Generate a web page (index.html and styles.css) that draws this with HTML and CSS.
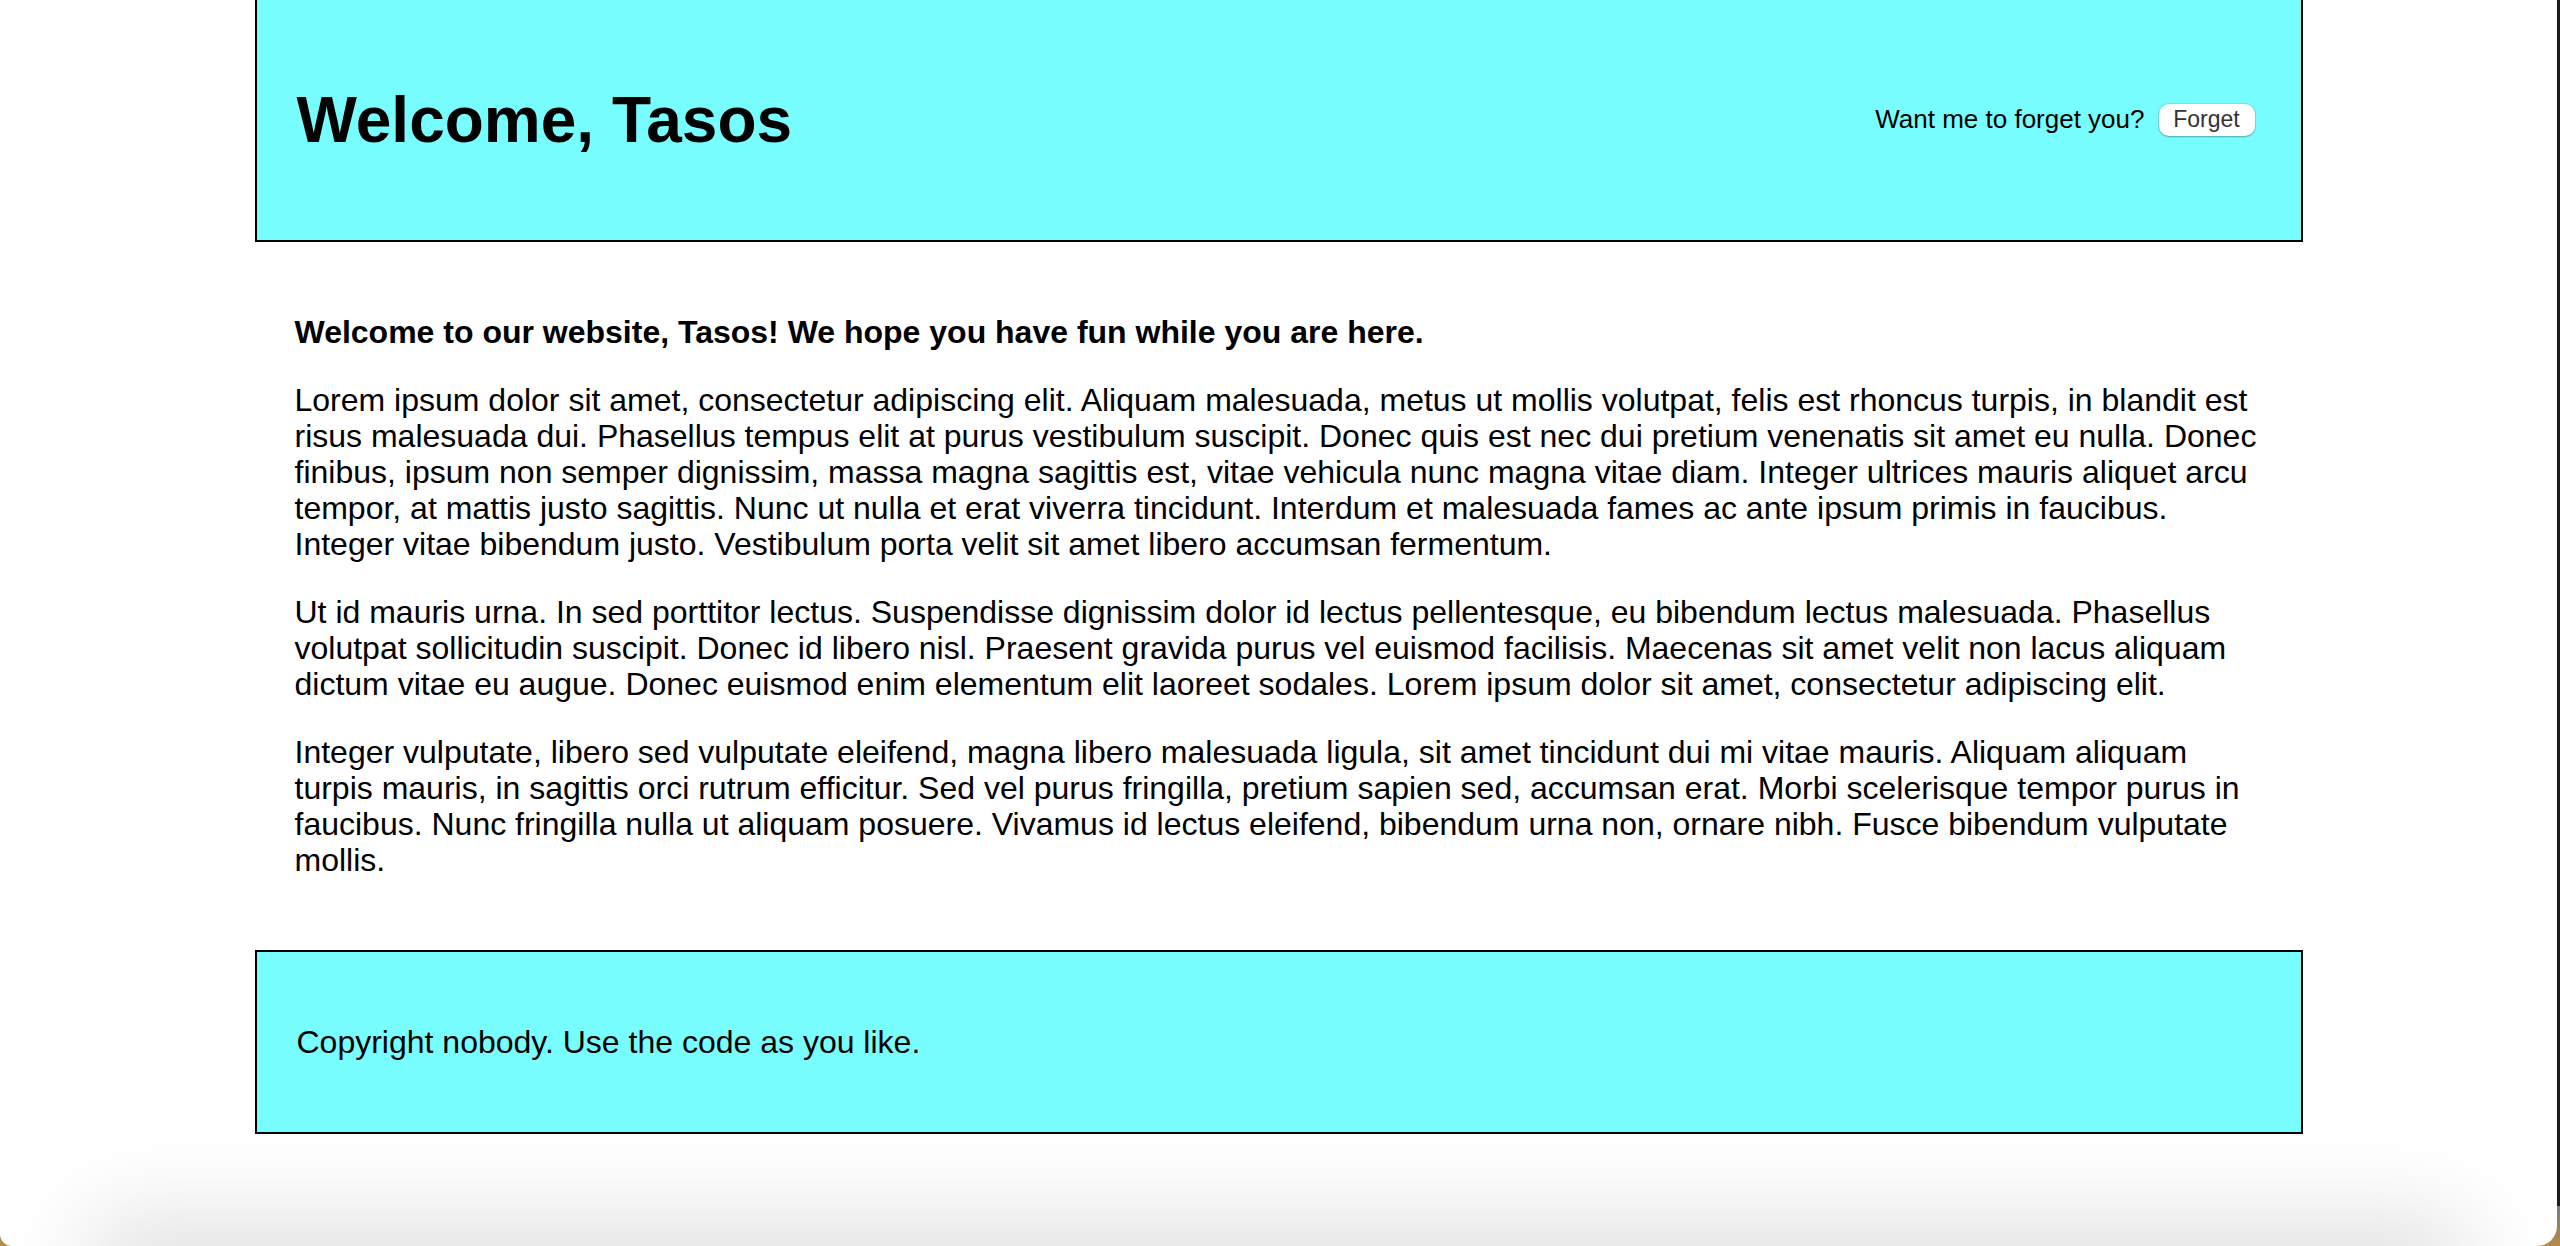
FILE: index.html
```html
<!DOCTYPE html>
<html lang="en">
<head>
<meta charset="utf-8">
<title>Welcome, Tasos</title>
<link rel="stylesheet" href="styles.css">
</head>
<body>
<div class="screen">
  <div class="window">
    <div class="page">
      <header class="site-header">
        <h1 class="title">Welcome, Tasos</h1>
        <div class="forget">
          <span class="forget-text">Want me to forget you?</span>
          <button class="forget-btn" type="button">Forget</button>
        </div>
      </header>
      <main class="content">
        <p class="lead">Welcome to our website, Tasos! We hope you have fun while you are here.</p>
        <p>Lorem ipsum dolor sit amet, consectetur adipiscing elit. Aliquam malesuada, metus ut mollis volutpat, felis est rhoncus turpis, in blandit est risus malesuada dui. Phasellus tempus elit at purus vestibulum suscipit. Donec quis est nec dui pretium venenatis sit amet eu nulla. Donec finibus, ipsum non semper dignissim, massa magna sagittis est, vitae vehicula nunc magna vitae diam. Integer ultrices mauris aliquet arcu tempor, at mattis justo sagittis. Nunc ut nulla et erat viverra tincidunt. Interdum et malesuada fames ac ante ipsum primis in faucibus. Integer vitae bibendum justo. Vestibulum porta velit sit amet libero accumsan fermentum.</p>
        <p>Ut id mauris urna. In sed porttitor lectus. Suspendisse dignissim dolor id lectus pellentesque, eu bibendum lectus malesuada. Phasellus volutpat sollicitudin suscipit. Donec id libero nisl. Praesent gravida purus vel euismod facilisis. Maecenas sit amet velit non lacus aliquam dictum vitae eu augue. Donec euismod enim elementum elit laoreet sodales. Lorem ipsum dolor sit amet, consectetur adipiscing elit.</p>
        <p>Integer vulputate, libero sed vulputate eleifend, magna libero malesuada ligula, sit amet tincidunt dui mi vitae mauris. Aliquam aliquam turpis mauris, in sagittis orci rutrum efficitur. Sed vel purus fringilla, pretium sapien sed, accumsan erat. Morbi scelerisque tempor purus in faucibus. Nunc fringilla nulla ut aliquam posuere. Vivamus id lectus eleifend, bibendum urna non, ornare nibh. Fusce bibendum vulputate mollis.</p>
      </main>
      <footer class="site-footer">
        <p>Copyright nobody. Use the code as you like.</p>
      </footer>
    </div>
    <div class="shade"></div>
  </div>
  <div class="frame-edge"></div>
</div>
</body>
</html>
```

FILE: styles.css
```css
html, body {
  margin: 0;
  padding: 0;
}

body {
  width: 2560px;
  height: 1246px;
  overflow: hidden;
  font-family: "Liberation Sans", Arial, Helvetica, sans-serif;
  font-size: 32px;
  color: #000;
}

.screen {
  position: relative;
  width: 2560px;
  height: 1246px;
  background: linear-gradient(180deg, #2f5f96 0%, #3a6ea8 94%, #b88a4a 100%);
  overflow: hidden;
}

.window {
  position: relative;
  width: 2557px;
  height: 1246px;
  background: #fff;
  border-radius: 0 0 20px 12px;
  overflow: hidden;
}

.frame-edge {
  position: absolute;
  top: 0;
  right: 0;
  width: 3px;
  height: 1206px;
  background: #1c1c1c;
}

.page {
  width: 2048px;
  margin: 0 auto;
}

.site-header {
  display: flex;
  align-items: center;
  justify-content: space-between;
  padding: 40px;
  background: #78fdfe;
  border: 2px solid #000;
  border-top: 0;
}

.title {
  margin: 42.88px 0;
  font-size: 64px;
  font-weight: bold;
  line-height: normal;
}

.forget {
  display: flex;
  align-items: center;
}

.forget-text {
  font-size: 26px;
}

.forget-btn {
  margin: 0 6px 0 14px;
  width: 96px;
  height: 32px;
  padding: 0;
  border: 0;
  border-radius: 10px;
  background: #fff;
  box-shadow: 0 0 0 1px rgba(0, 0, 0, 0.07), 0 1px 2px rgba(0, 0, 0, 0.28);
  font-family: "Liberation Sans", Arial, sans-serif;
  font-size: 23px;
  color: #333;
}

.content {
  padding: 40px;
}

.content p,
.site-footer p {
  margin: 32px 0;
  line-height: 36px;
}

.lead {
  font-weight: bold;
}

.site-footer {
  padding: 40px;
  background: #78fdfe;
  border: 2px solid #000;
}

.shade {
  position: absolute;
  left: 110px;
  right: 110px;
  bottom: -40px;
  height: 40px;
  border-radius: 40px;
  box-shadow: 0 0 90px 30px rgba(0, 0, 0, 0.12);
}
```
